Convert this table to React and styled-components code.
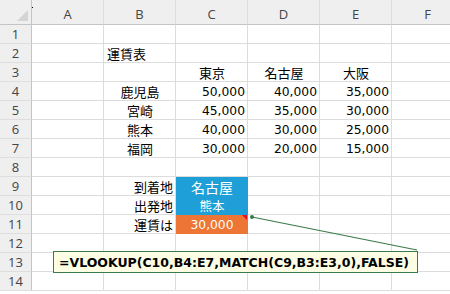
import React from 'react';
import styled, { createGlobalStyle } from 'styled-components';

const GlobalStyle = createGlobalStyle`
  html, body {
    margin: 0;
    padding: 0;
    background: #ffffff;
    overflow: hidden;
  }
`;

const COLS = ['A', 'B', 'C', 'D', 'E', 'F'];

// cell contents by row, keyed by column letter
const data = {
  2: { B: { text: '運賃表', align: 'left' } },
  3: {
    C: { text: '東京', align: 'center' },
    D: { text: '名古屋', align: 'center' },
    E: { text: '大阪', align: 'center' }
  },
  4: {
    B: { text: '鹿児島', align: 'center' },
    C: { text: '50,000', num: true },
    D: { text: '40,000', num: true },
    E: { text: '35,000', num: true }
  },
  5: {
    B: { text: '宮崎', align: 'center' },
    C: { text: '45,000', num: true },
    D: { text: '35,000', num: true },
    E: { text: '30,000', num: true }
  },
  6: {
    B: { text: '熊本', align: 'center' },
    C: { text: '40,000', num: true },
    D: { text: '30,000', num: true },
    E: { text: '25,000', num: true }
  },
  7: {
    B: { text: '福岡', align: 'center' },
    C: { text: '30,000', num: true },
    D: { text: '20,000', num: true },
    E: { text: '15,000', num: true }
  },
  9: {
    B: { text: '到着地', align: 'right' },
    C: { text: '名古屋', align: 'center', fill: 'blue', big: true, merged: true }
  },
  10: {
    B: { text: '出発地', align: 'right' },
    C: { text: '熊本', align: 'center', fill: 'blue', small: true }
  },
  11: {
    B: { text: '運賃は', align: 'right' },
    C: { text: '30,000', align: 'center', num: true, fill: 'orange', comment: true }
  }
};

const fills = {
  blue: '#1f9fd7',
  orange: '#ed7535'
};

const App = () => {
  const rows = Array.from({ length: 14 }, (_, i) => i + 1);

  return (
    <>
      <GlobalStyle />
      <Sheet>
        <Grid>
          <Corner>
            <CornerDot />
            <CornerTriangle />
          </Corner>
          {COLS.map((c) => (
            <ColHead key={c}>{c}</ColHead>
          ))}

          {rows.map((r) => (
            <React.Fragment key={r}>
              <RowHead>{r}</RowHead>
              {COLS.map((c) => {
                const cell = (data[r] || {})[c];
                return (
                  <Cell
                    key={c}
                    $align={cell ? cell.align || 'right' : 'left'}
                    $fill={cell && cell.fill ? fills[cell.fill] : null}
                    $merged={cell && cell.merged}
                    $num={cell && cell.num}
                    $size={cell && cell.big ? 14 : cell && cell.small ? 12.5 : null}
                  >
                    {cell ? cell.text : ''}
                    {cell && cell.comment && <CommentMark />}
                  </Cell>
                );
              })}
            </React.Fragment>
          ))}
        </Grid>

        <Connector width="450" height="294" viewBox="0 0 450 294">
          <line x1="252" y1="217" x2="417" y2="250" stroke="#3a7a4c" strokeWidth="1.2" />
          <circle cx="252" cy="217" r="2" fill="#3a7a4c" />
        </Connector>

        <Callout>=VLOOKUP(C10,B4:E7,MATCH(C9,B3:E3,0),FALSE)</Callout>
      </Sheet>
    </>
  );
};

const Sheet = styled.div`
  position: relative;
  width: 450px;
  height: 294px;
  overflow: hidden;
  background: #ffffff;
`;

const Grid = styled.div`
  display: grid;
  grid-template-columns: 32px repeat(6, 72px);
  grid-template-rows: 25px repeat(14, 19px);
`;

const HeadBase = styled.div`
  box-sizing: border-box;
  background: #efefef;
  color: #444444;
  font-family: "Open Sans", "DejaVu Sans", sans-serif;
  font-size: 13px;
  display: flex;
  align-items: center;
  justify-content: center;
`;

const Corner = styled(HeadBase)`
  position: relative;
  border-right: 1px solid #c4c4c4;
  border-bottom: 1px solid #c4c4c4;
`;

const CornerDot = styled.span`
  position: absolute;
  left: 32px;
  top: 7px;
  width: 1px;
  height: 1px;
  background: #000000;
`;

const CornerTriangle = styled.span`
  position: absolute;
  right: 3px;
  bottom: 3px;
  width: 0;
  height: 0;
  border-left: 11px solid transparent;
  border-bottom: 11px solid #d4d4d4;
`;

const ColHead = styled(HeadBase)`
  border-right: 1px solid #dedede;
  border-bottom: 1px solid #c4c4c4;
  padding-top: 4px;
`;

const RowHead = styled(HeadBase)`
  border-right: 1px solid #c4c4c4;
  border-bottom: 1px solid #dedede;
`;

const Cell = styled.div`
  position: relative;
  box-sizing: border-box;
  border-right: 1px solid ${(p) => (p.$fill ? p.$fill : '#dcdcdc')};
  border-bottom: 1px solid ${(p) => (p.$fill && p.$merged ? p.$fill : p.$fill ? '#ffffff00' : '#dcdcdc')};
  background: ${(p) => p.$fill || '#ffffff'};
  color: ${(p) => (p.$fill ? '#ffffff' : '#000000')};
  font-family: ${(p) => (p.$num ? '"DejaVu Sans", sans-serif' : '"Noto Sans CJK JP", sans-serif')};
  font-size: ${(p) => (p.$size ? p.$size + 'px' : p.$num ? '12.3px' : '13px')};
  line-height: 18px;
  white-space: nowrap;
  display: flex;
  align-items: center;
  justify-content: ${(p) =>
    p.$align === 'center' ? 'center' : p.$align === 'left' ? 'flex-start' : 'flex-end'};
  padding: 1px 2px 0 3px;
`;

const CommentMark = styled.span`
  position: absolute;
  top: 0;
  right: 0;
  width: 0;
  height: 0;
  border-left: 5px solid transparent;
  border-top: 5px solid #e8101a;
`;

const Connector = styled.svg`
  position: absolute;
  left: 0;
  top: 0;
  pointer-events: none;
`;

const Callout = styled.div`
  position: absolute;
  left: 53px;
  top: 251px;
  width: 365px;
  height: 22px;
  box-sizing: border-box;
  border: 1.5px solid #3a7a4c;
  background: #fdfde4;
  color: #000000;
  font-family: "DejaVu Sans", sans-serif;
  font-weight: bold;
  font-size: 12.5px;
  display: flex;
  align-items: center;
  padding-left: 5px;
  white-space: nowrap;
`;

export default App;
